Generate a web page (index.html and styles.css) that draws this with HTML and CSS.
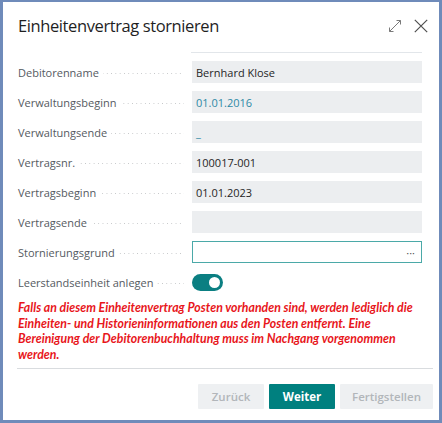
FILE: index.html
```html
<!DOCTYPE html>
<html lang="de">
<head>
<meta charset="utf-8">
<title>Einheitenvertrag stornieren</title>
<link rel="stylesheet" href="styles.css">
</head>
<body>
<div class="dialog">
  <header class="head">
    <h1 class="title">Einheitenvertrag stornieren</h1>
    <div class="tools">
      <svg class="ico ico-expand" width="14" height="14" viewBox="0 0 14 14" aria-hidden="true">
        <path d="M1.5 12.5 L12.5 1.5 M8.5 1.5 H12.5 V5.5 M1.5 8.5 V12.5 H5.5" fill="none" stroke="#7a7a7a" stroke-width="1"/>
      </svg>
      <svg class="ico ico-close" width="14" height="14" viewBox="0 0 14 14" aria-hidden="true">
        <path d="M0.8 0.8 L13.2 13.2 M13.2 0.8 L0.8 13.2" fill="none" stroke="#505050" stroke-width="1.2"/>
      </svg>
    </div>
  </header>
  <div class="content">
    <div class="topline"></div>
    <div class="form">
      <div class="row"><span class="label">Debitorenname</span><span class="dots"></span><span class="field">Bernhard Klose</span></div>
      <div class="row"><span class="label">Verwaltungsbeginn</span><span class="dots"></span><span class="field link">01.01.2016</span></div>
      <div class="row"><span class="label">Verwaltungsende</span><span class="dots"></span><span class="field link">_</span></div>
      <div class="row"><span class="label">Vertragsnr.</span><span class="dots"></span><span class="field">100017-001</span></div>
      <div class="row"><span class="label">Vertragsbeginn</span><span class="dots"></span><span class="field">01.01.2023</span></div>
      <div class="row"><span class="label">Vertragsende</span><span class="dots"></span><span class="field"></span></div>
      <div class="row"><span class="label">Stornierungsgrund</span><span class="dots"></span><span class="field input"><span class="more">···</span></span></div>
      <div class="row"><span class="label">Leerstandseinheit anlegen</span><span class="dots"></span><span class="toggle-cell"><span class="toggle"><span class="knob"></span></span></span></div>
    </div>
    <p class="warn">Falls an diesem Einheitenvertrag Posten vorhanden sind, werden lediglich die Einheiten- und Historieninformationen aus den Posten entfernt. Eine Bereinigung der Debitorenbuchhaltung muss im Nachgang vorgenommen werden.</p>
  </div>
  <div class="sep"></div>
  <footer class="actions">
    <button class="btn btn-dis btn-back">Zurück</button>
    <button class="btn btn-primary">Weiter</button>
    <button class="btn btn-dis btn-finish">Fertigstellen</button>
  </footer>
</div>
</body>
</html>
```
FILE: styles.css
```css
* { box-sizing: border-box; }
html, body { margin: 0; padding: 0; background: #ffffff; }
body { font-family: "Open Sans", "Noto Sans", sans-serif; }

.dialog {
  width: 442px;
  height: 423px;
  background: #ffffff;
  border-style: solid;
  border-color: #6f8bba;
  border-width: 2px 3px 3px 3px;
  display: flex;
  flex-direction: column;
}

.head {
  height: 46px;
  display: flex;
  align-items: center;
  justify-content: space-between;
  padding: 0 11px 0 15px;
}
.title {
  margin: 0;
  font-size: 16.5px;
  font-weight: 400;
  color: #1f1f1f;
  letter-spacing: -0.4px;
}
.tools { display: flex; align-items: center; gap: 12px; padding-top: 2px; }
.ico { display: block; }

.content { padding: 0 17px 0 15px; }
.topline {
  margin: 4px 0 0 173px;
  height: 1px;
  background: #e2e6ea;
}
.form {
  margin-top: 8px;
  display: flex;
  flex-direction: column;
  gap: 8px;
}
.row {
  display: grid;
  grid-template-columns: auto 1fr 230px;
  align-items: center;
  height: 22px;
}
.label {
  font-size: 11px;
  color: #555a5f;
  white-space: nowrap;
  padding-right: 4px;
}
.dots {
  height: 1px;
  margin: 3px 8px 0 0;
  align-self: center;
  background-image: linear-gradient(to right, #c4c6c8 1px, transparent 1px);
  background-size: 4.3px 1px;
  background-repeat: repeat-x;
  background-position: right center;
}
.field {
  height: 22px;
  background: #eceef0;
  font-size: 11px;
  color: #262626;
  display: flex;
  align-items: center;
  padding-left: 4px;
}
.field.link { color: #2e8aa6; }
.field.input {
  background: #ffffff;
  border: 1px solid #4ba9a8;
  justify-content: flex-end;
  padding-right: 6px;
}
.more { font-size: 11px; color: #555; letter-spacing: 0; }

.toggle-cell { display: flex; align-items: center; }
.toggle {
  width: 31px;
  height: 17px;
  border-radius: 9px;
  background: #0b7f82;
  position: relative;
}
.knob {
  position: absolute;
  right: 3px;
  top: 3px;
  width: 11px;
  height: 11px;
  border-radius: 50%;
  background: #ffffff;
}

.warn {
  margin: 7px 0 0 0;
  font-family: "Lato", "Open Sans", sans-serif;
  font-size: 12.3px;
  font-weight: 700;
  font-style: italic;
  line-height: 15.5px;
  color: #e8161b;
}

.sep {
  margin: 6px 6px 0 14px;
  height: 1px;
  background: #d9dcdf;
}
.actions {
  display: flex;
  justify-content: flex-end;
  gap: 5px;
  padding: 15px 6px 0 0;
}
.btn {
  height: 25px;
  border: none;
  border-radius: 1px;
  font-family: "Open Sans", "Noto Sans", sans-serif;
  font-size: 11.5px;
  font-weight: 600;
  padding: 0;
}
.btn-back { width: 66px; }
.btn-finish { width: 93px; }
.btn-dis { background: #eef0f2; color: #b2b6ba; }
.btn-primary { width: 66px; background: #00807f; color: #ffffff; font-weight: 700; }
```
